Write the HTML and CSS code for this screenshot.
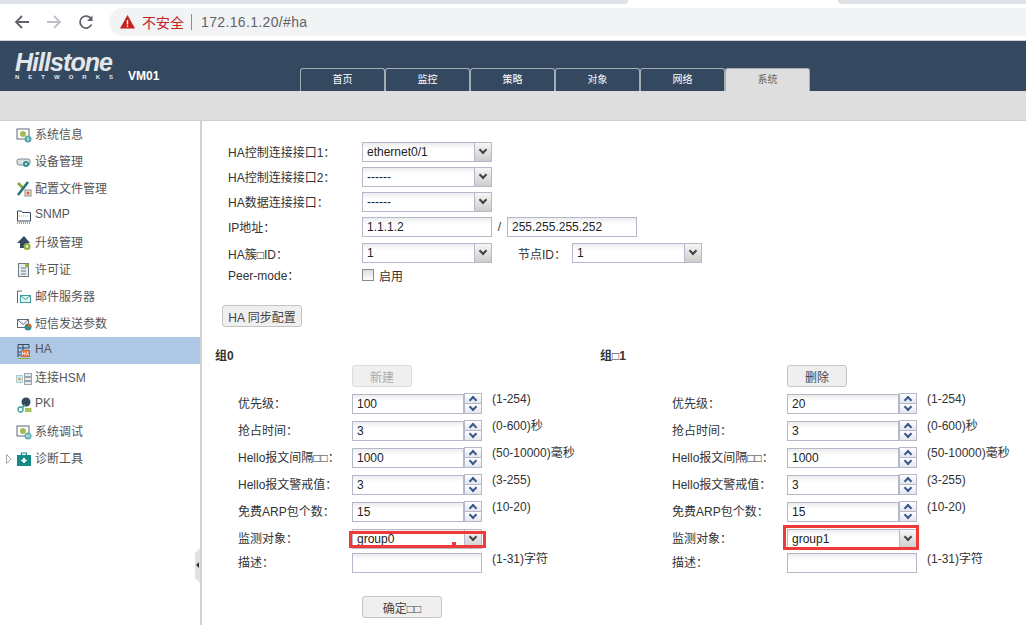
FILE: index.html
```html
<!DOCTYPE html>
<html lang="zh-CN">
<head>
  <meta charset="UTF-8">
  <title>Hillstone VM01</title>
  <link rel="stylesheet" href="styles.css">
</head>
<body>

<!-- Browser chrome -->
<div class="chrome-strip">
  <div class="strip-left"></div>
  <div class="strip-tab"></div>
  <div class="strip-right"></div>
</div>
<div class="chrome-bar">
  <svg class="nav-icon" width="16" height="16" viewBox="0 0 16 16"><path d="M15 8H2M8 2L2 8l6 6" fill="none" stroke="#5f6368" stroke-width="1.800"/></svg>
  <svg class="nav-icon" width="16" height="16" viewBox="0 0 16 16"><path d="M1 8h13M8 2l6 6-6 6" fill="none" stroke="#bdc1c6" stroke-width="1.800"/></svg>
  <svg class="nav-icon" width="16" height="16" viewBox="0 0 16 16"><path d="M13.500 10.500a6 6 0 1 1-.3-5.500" fill="none" stroke="#5f6368" stroke-width="1.800"/><path d="M14.500 1.500v5.500H9z" fill="#5f6368"/></svg>
  <div class="omnibox">
    <svg width="15" height="14" viewBox="0 0 15 14"><path d="M7.500 0L15 13.500H0z" fill="#c5221f"/><path d="M6.800 5h1.400v4.500H6.800zM6.800 10.400h1.400v1.500H6.800z" fill="#fff"/></svg>
    <span class="not-secure">不安全</span>
    <span class="omni-sep"></span>
    <span class="url">172.16.1.20/#ha</span>
  </div>
</div>

<!-- App header -->
<div class="header">
  <div class="logo">
    <div class="logo-name">Hillstone</div>
    <div class="logo-sub">NETWORKS</div>
  </div>
  <div class="device-name">VM01</div>
  <div class="tabs">
    <div class="tab">首页</div>
    <div class="tab">监控</div>
    <div class="tab">策略</div>
    <div class="tab">对象</div>
    <div class="tab">网络</div>
    <div class="tab active">系统</div>
  </div>
</div>
<div class="subbar"></div>

<div class="main">
  <div class="sidebar">
    <div class="menu-item">
      <svg class="icon" viewBox="0 0 16 16"><rect x="1" y="2" width="12" height="10" fill="#fff" stroke="#5c6b7a"/><circle cx="7" cy="7" r="3" fill="#a3bd55"/><circle cx="12" cy="12" r="3.500" fill="#57abab"/><path d="M12 10.500v3" stroke="#fff"/></svg>
      <span>系统信息</span>
    </div>
    <div class="menu-item">
      <svg class="icon" viewBox="0 0 16 16"><rect x="1" y="5" width="13" height="6" rx="2" fill="#dfe3e6" stroke="#7b8895"/><circle cx="10" cy="10" r="3" fill="#2f8f8f"/><circle cx="10" cy="10" r="1" fill="#fff"/></svg>
      <span>设备管理</span>
    </div>
    <div class="menu-item">
      <svg class="icon" viewBox="0 0 16 16"><path d="M2 2l6 6" stroke="#8fae3c" stroke-width="3"/><path d="M12 1L2 14" stroke="#23727c" stroke-width="2.500"/><rect x="9" y="9" width="6" height="6" fill="#f3ded6" stroke="#8a8f95"/><circle cx="12" cy="12" r="1.500" fill="#d9652f"/></svg>
      <span>配置文件管理</span>
    </div>
    <div class="menu-item">
      <svg class="icon" viewBox="0 0 16 16"><path d="M1.500 13V3h4l1 1.500h8V13z" fill="#fff" stroke="#34495f"/><path d="M3 8h10" stroke="#9db2b8" stroke-dasharray="1 1"/><path d="M1 15h14" stroke="#34495f" stroke-dasharray="1 1"/></svg>
      <span>SNMP</span>
    </div>
    <div class="menu-item">
      <svg class="icon" viewBox="0 0 16 16"><path d="M8 1L1 8h3v5h6V8h4z" fill="#34495f"/><circle cx="11" cy="11.500" r="3.500" fill="#8fae3c"/><circle cx="11" cy="11.500" r="1.200" fill="#fff"/></svg>
      <span>升级管理</span>
    </div>
    <div class="menu-item">
      <svg class="icon" viewBox="0 0 16 16"><rect x="2.500" y="1.500" width="10" height="13" fill="#e8ebed" stroke="#6b7885"/><path d="M5 6h5M5 9h5M5 12h5" stroke="#6b7885"/><circle cx="11" cy="3.500" r="2" fill="#8fae3c"/></svg>
      <span>许可证</span>
    </div>
    <div class="menu-item">
      <svg class="icon" viewBox="0 0 16 16"><path d="M1.500 14V2H6" fill="none" stroke="#5c6b7a"/><rect x="4.500" y="6.500" width="10" height="7" fill="#e4f3f3" stroke="#3d9c9c"/><path d="M4.500 6.500l5 4 5-4" fill="none" stroke="#3d9c9c"/></svg>
      <span>邮件服务器</span>
    </div>
    <div class="menu-item">
      <svg class="icon" viewBox="0 0 16 16"><rect x="1.500" y="3.500" width="11" height="8" fill="#fff" stroke="#5c6b7a"/><path d="M1.500 3.500l5.500 5 5.500-5" fill="none" stroke="#5c6b7a"/><circle cx="12" cy="11" r="3.500" fill="#2f8f8f"/><path d="M12 11V7.500A3.500 3.500 0 0 1 15.500 11z" fill="#d9652f"/></svg>
      <span>短信发送参数</span>
    </div>
    <div class="menu-item selected">
      <svg class="icon" viewBox="0 0 16 16"><path d="M2 1.500h11M2 1.500V14M7 1.500V7M13 1.500V5M2 5h11M2 9h3M2 12h3" fill="none" stroke="#34495f"/><rect x="5" y="7" width="9" height="7" fill="#d9652f"/><path d="M6.500 8.500v4M9 8.500v4M6.500 10.500H9M10.500 12.500l1-4 1 4" fill="none" stroke="#fff" stroke-width=".8"/><path d="M2 15.500h12" stroke="#8fae3c"/></svg>
      <span>HA</span>
    </div>
    <div class="menu-item">
      <svg class="icon" viewBox="0 0 16 16"><rect x="0.500" y="5.500" width="6" height="7" fill="#d8ecec" stroke="#a9cfcf"/><circle cx="3.500" cy="9" r="1.500" fill="#e09a6f"/><rect x="8.500" y="3.500" width="7" height="3" fill="#e8ebed" stroke="#9aa5ae"/><rect x="8.500" y="7.500" width="7" height="3" fill="#e8ebed" stroke="#9aa5ae"/><rect x="8.500" y="11.500" width="7" height="3" fill="#e8ebed" stroke="#9aa5ae"/></svg>
      <span>连接HSM</span>
    </div>
    <div class="menu-item">
      <svg class="icon" viewBox="0 0 16 16"><circle cx="10" cy="5" r="4.500" fill="#34495f"/><circle cx="4.500" cy="12.500" r="2.500" fill="none" stroke="#3d9c9c" stroke-width="1.300"/><path d="M6.500 10.500L9 7.500" stroke="#3d9c9c" stroke-width="1.500"/><rect x="9" y="11" width="6.500" height="4" fill="#a8c255"/></svg>
      <span>PKI</span>
    </div>
    <div class="menu-item">
      <svg class="icon" viewBox="0 0 16 16"><rect x="1" y="2" width="12" height="10" fill="#fff" stroke="#5c6b7a"/><circle cx="7" cy="7" r="3" fill="#a3bd55"/><circle cx="12" cy="12" r="3.500" fill="#57abab"/><path d="M11 10.500v3M13 10.500v3" stroke="#fff"/></svg>
      <span>系统调试</span>
    </div>
    <div class="menu-item">
      <svg class="expander" width="6" height="10" viewBox="0 0 6 10"><path d="M.5.500L5 5 .5 9.500z" fill="#fff" stroke="#a8a8a8"/></svg>
      <svg class="icon" viewBox="0 0 16 16"><path d="M5.500 4V2h5v2" fill="none" stroke="#138a85" stroke-width="1.200"/><rect x="1" y="4" width="14" height="11" fill="#138a85"/><path d="M8 7v5M5.500 9.500h5" stroke="#fff" stroke-width="2"/></svg>
      <span>诊断工具</span>
    </div>
    <div class="collapse-handle"></div>
  </div>

  <div class="content">
    <div class="form-row">
      <label class="ha-label">HA控制连接接口1：</label>
      <div class="select"><span>ethernet0/1</span><b class="drop"><i></i></b></div>
    </div>
    <div class="form-row">
      <label class="ha-label">HA控制连接接口2：</label>
      <div class="select"><span>------</span><b class="drop"><i></i></b></div>
    </div>
    <div class="form-row">
      <label class="ha-label">HA数据连接接口：</label>
      <div class="select"><span>------</span><b class="drop"><i></i></b></div>
    </div>
    <div class="form-row">
      <label class="ha-label">IP地址：</label>
      <div class="text-input"><span>1.1.1.2</span></div>
      <span class="slash">/</span>
      <div class="text-input"><span>255.255.255.252</span></div>
    </div>
    <div class="form-row cluster">
      <label class="ha-label">HA簇□ID：</label>
      <div class="select"><span>1</span><b class="drop"><i></i></b></div>
      <label class="node-label">节点ID：</label>
      <div class="select"><span>1</span><b class="drop"><i></i></b></div>
    </div>
    <div class="form-row peer">
      <label class="ha-label">Peer-mode：</label>
      <span class="checkbox"></span><span>启用</span>
    </div>

    <button class="btn sync">HA 同步配置</button>

    <div class="groups">
      <div class="group">
        <div class="group-title">组0</div>
        <div class="group-action"><button class="btn disabled">新建</button></div>
        <div class="group-row"><label>优先级：</label><div class="spin"><span>100</span><b class="arrows"><i class="up"></i><i class="down"></i></b></div><span class="hint">(1-254)</span></div>
        <div class="group-row"><label>抢占时间：</label><div class="spin"><span>3</span><b class="arrows"><i class="up"></i><i class="down"></i></b></div><span class="hint">(0-600)秒</span></div>
        <div class="group-row"><label>Hello报文间隔□□：</label><div class="spin"><span>1000</span><b class="arrows"><i class="up"></i><i class="down"></i></b></div><span class="hint">(50-10000)毫秒</span></div>
        <div class="group-row"><label>Hello报文警戒值：</label><div class="spin"><span>3</span><b class="arrows"><i class="up"></i><i class="down"></i></b></div><span class="hint">(3-255)</span></div>
        <div class="group-row"><label>免费ARP包个数：</label><div class="spin"><span>15</span><b class="arrows"><i class="up"></i><i class="down"></i></b></div><span class="hint">(10-20)</span></div>
        <div class="group-row short"><label>监测对象：</label><div class="select"><span>group0</span><b class="drop"><i></i></b><em class="mark"></em><em class="red-dot"></em></div></div>
        <div class="group-row"><label>描述：</label><div class="text-input"></div><span class="hint desc">(1-31)字符</span></div>
        <div class="ok-row"><button class="btn ok">确定□□</button></div>
      </div>

      <div class="group right">
        <div class="group-title">组□1</div>
        <div class="group-action"><button class="btn">删除</button></div>
        <div class="group-row"><label>优先级：</label><div class="spin"><span>20</span><b class="arrows"><i class="up"></i><i class="down"></i></b></div><span class="hint">(1-254)</span></div>
        <div class="group-row"><label>抢占时间：</label><div class="spin"><span>3</span><b class="arrows"><i class="up"></i><i class="down"></i></b></div><span class="hint">(0-600)秒</span></div>
        <div class="group-row"><label>Hello报文间隔□□：</label><div class="spin"><span>1000</span><b class="arrows"><i class="up"></i><i class="down"></i></b></div><span class="hint">(50-10000)毫秒</span></div>
        <div class="group-row"><label>Hello报文警戒值：</label><div class="spin"><span>3</span><b class="arrows"><i class="up"></i><i class="down"></i></b></div><span class="hint">(3-255)</span></div>
        <div class="group-row"><label>免费ARP包个数：</label><div class="spin"><span>15</span><b class="arrows"><i class="up"></i><i class="down"></i></b></div><span class="hint">(10-20)</span></div>
        <div class="group-row short"><label>监测对象：</label><div class="select"><span>group1</span><b class="drop"><i></i></b><em class="mark"></em></div></div>
        <div class="group-row"><label>描述：</label><div class="text-input"></div><span class="hint desc">(1-31)字符</span></div>
      </div>
    </div>
  </div>
</div>

</body>
</html>
```

FILE: styles.css
```css
/* Global Styles */
html, body {
  margin: 0;
  padding: 0;
  height: 625px;
  overflow: hidden;
}

body {
  font-family: "Liberation Sans", "Noto Sans CJK SC", sans-serif;
  font-size: 12px;
  color: #333;
  background-color: #fff;
  display: flex;
  flex-direction: column;
}

/* Browser chrome */
.chrome-strip {
  height: 4px;
  flex-shrink: 0;
  display: flex;
  background-color: #fff;
}

.strip-left, .strip-right {
  background-color: #dee1e6;
}

.strip-left {
  width: 628px;
  border-radius: 0 0 4px 0;
}

.strip-tab {
  width: 210px;
}

.strip-right {
  flex: 1;
  border-radius: 0 0 0 4px;
}

.chrome-bar {
  height: 37px;
  flex-shrink: 0;
  box-sizing: border-box;
  background-color: #fff;
  border-bottom: 1px solid #d0d3d6;
  padding: 0 0 1px 14px;
  display: flex;
  align-items: center;
  gap: 16px;
}

.omnibox {
  flex: 1;
  height: 28px;
  margin-left: -1px;
  background-color: #f1f3f4;
  border-radius: 14px 0 0 14px;
  display: flex;
  align-items: center;
  padding-left: 11px;
  font-size: 14px;
}

.not-secure {
  color: #c5221f;
  margin-left: 7px;
}

.omni-sep {
  width: 1px;
  height: 16px;
  background-color: #8a8d91;
  margin: 0 9px 0 7px;
}

.url {
  color: #5f6368;
  letter-spacing: 0.35px;
}

/* Header */
.header {
  height: 50px;
  flex-shrink: 0;
  background-color: #34495f;
  display: flex;
  align-items: flex-end;
}

.logo {
  width: 100px;
  margin: 0 0 10px 15px;
  color: #e4e7ea;
}

.logo-name {
  font-size: 25px;
  line-height: 24px;
  font-weight: bold;
  font-style: italic;
  letter-spacing: -0.95px;
}

.logo-sub {
  font-size: 6px;
  line-height: 7px;
  font-weight: bold;
  letter-spacing: 9px;
  white-space: nowrap;
}

.device-name {
  width: 172px;
  margin: 0 0 8px 13px;
  color: #fff;
  font-weight: bold;
  font-size: 12px;
}

.tabs {
  display: flex;
}

.tab {
  width: 83px;
  height: 22px;
  line-height: 21px;
  text-align: center;
  font-size: 10px;
  color: #fff;
  border: 1px solid #a5adb5;
  border-bottom: none;
  border-radius: 3px 3px 0 0;
}

.tab.active {
  background-color: #dedede;
  color: #666;
}

.subbar {
  height: 30px;
  flex-shrink: 0;
  box-sizing: border-box;
  background-color: #dedede;
  border-bottom: 1px solid #cfcfcf;
}

.main {
  flex: 1;
  display: flex;
  min-height: 0;
}

/* Sidebar */
.sidebar {
  position: relative;
  width: 200px;
  flex-shrink: 0;
  border-right: 2px solid #d2d2d2;
}

.menu-item {
  position: relative;
  height: 27px;
  display: flex;
  align-items: center;
  gap: 3px;
  padding-left: 16px;
  color: #555;
}

.menu-item span {
  margin-bottom: 3px;
}

.menu-item.selected {
  background-color: #aec7e4;
}

.icon {
  width: 16px;
  height: 16px;
  flex-shrink: 0;
}

.expander {
  position: absolute;
  left: 6px;
  top: 9px;
}

.collapse-handle {
  position: absolute;
  right: 0;
  top: 427px;
  width: 5px;
  height: 35px;
  background-color: #e2e2e2;
  clip-path: polygon(0 5px, 100% 0, 100% 100%, 0 30px);
}

.collapse-handle::after {
  content: "";
  position: absolute;
  left: 1px;
  top: 14px;
  border: 3px solid transparent;
  border-right-color: #333;
  border-left-width: 0;
}

/* Form */
.content {
  flex: 1;
  padding: 19px 0 0 26px;
  min-width: 0;
}

.form-row {
  height: 24px;
  margin-bottom: 1px;
  display: flex;
  align-items: center;
}

.ha-label {
  width: 134px;
  flex-shrink: 0;
  margin-bottom: 2px;
}

.select, .text-input, .spin {
  position: relative;
  box-sizing: border-box;
  width: 130px;
  height: 20px;
  line-height: 18px;
  padding-left: 4px;
  border: 1px solid #b5b8c8;
  background: linear-gradient(#ececec, #fff 6px);
  color: #222;
  flex-shrink: 0;
}

.drop {
  position: absolute;
  top: 0;
  right: 0;
  bottom: 0;
  width: 16px;
  border-left: 1px solid #b5b8c8;
  background: linear-gradient(#f6f6f6, #cdcdcd);
}

.drop i {
  position: absolute;
  left: 5px;
  top: 4px;
  width: 6px;
  height: 6px;
  box-sizing: border-box;
  border-right: 2px solid #444;
  border-bottom: 2px solid #444;
  transform: rotate(45deg);
}

.slash {
  width: 15px;
  text-align: center;
}

.form-row.cluster {
  margin-top: 2px;
  margin-bottom: 0;
}

.form-row.cluster .ha-label {
  margin-bottom: 0;
}

.node-label {
  width: 80px;
  padding-left: 26px;
  box-sizing: border-box;
}

.form-row.peer {
  height: 14px;
  margin-top: 3px;
  margin-bottom: 0;
}

.checkbox {
  box-sizing: border-box;
  width: 12px;
  height: 12px;
  border: 1px solid #8a8a8a;
  background: linear-gradient(#ddd, #fff);
  margin-right: 5px;
}

.btn {
  font-family: inherit;
  font-size: 12px;
  color: #444;
  height: 22px;
  padding: 0;
  border: 1px solid #c4c4c4;
  border-radius: 3px;
  background-color: #efefef;
}

.btn.sync {
  display: block;
  width: 80px;
  margin: 23px 0 0 -6px;
}

.btn.disabled {
  color: #aaa;
  border-color: #ddd;
}

.groups {
  display: flex;
  margin: 22px 0 0 -13px;
}

.group {
  width: 385px;
  flex-shrink: 0;
}

.group-title {
  font-weight: bold;
  height: 14px;
  line-height: 14px;
}

.group-action {
  padding-left: 137px;
  height: 29px;
  margin-top: 2px;
}

.group.right .group-action {
  padding-left: 187px;
}

.group-action .btn {
  width: 60px;
}

.group-row {
  height: 27px;
  display: flex;
  padding-left: 23px;
}

.group-row.short {
  height: 24px;
}

.group.right .group-row {
  padding-left: 72px;
}

.group-row label {
  width: 114px;
  flex-shrink: 0;
  line-height: 20px;
}

.group.right .group-row label {
  width: 115px;
}

.spin {
  width: 112px;
  margin-right: 18px;
}

.arrows {
  position: absolute;
  top: -2px;
  right: -19px;
  width: 18px;
  height: 21px;
  display: flex;
  flex-direction: column;
}

.arrows i {
  position: relative;
  flex: 1;
  box-sizing: border-box;
  border: 1px solid #b5b8c8;
  background: linear-gradient(#fff, #e4e6ee);
}

.arrows i.down {
  margin-top: -1px;
}

.arrows i::after {
  content: "";
  position: absolute;
  left: 5px;
  top: 3px;
  width: 6px;
  height: 6px;
  box-sizing: border-box;
  border-left: 2px solid #3a5a8c;
  border-top: 2px solid #3a5a8c;
  transform: rotate(45deg);
}

.arrows i.down::after {
  top: 0;
  transform: rotate(225deg);
}

.hint {
  padding-left: 10px;
  margin-top: -5px;
  line-height: 20px;
  white-space: nowrap;
}

.hint.desc {
  margin-top: -4px;
}

/* Red highlight boxes drawn over the two selects */
.mark {
  position: absolute;
  box-sizing: border-box;
  left: -4px;
  right: -5px;
  top: 1px;
  bottom: 0;
  border: 3px solid #f03a3a;
}

.group.right .mark {
  left: -5px;
  right: -3px;
  top: -5px;
  bottom: -2px;
}

.red-dot {
  position: absolute;
  left: 99px;
  top: 12px;
  width: 4px;
  height: 4px;
  background-color: #f03a3a;
}

.ok-row {
  padding: 16px 0 0 147px;
}

.btn.ok {
  width: 80px;
}
```
